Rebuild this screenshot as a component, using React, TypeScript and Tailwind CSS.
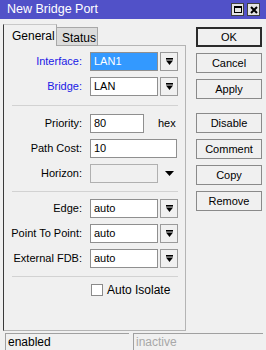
import React from "react";

function DropIcon() {
  return (
    <svg width="7" height="8" viewBox="0 0 7 8">
      <rect x="0" y="0" width="7" height="1.6" fill="#000" />
      <polygon points="0,2.6 7,2.6 3.5,7" fill="#000" />
    </svg>
  );
}

function Label({ text, blue }: { text: string; blue?: boolean }) {
  return (
    <div className={"w-[78px] text-right " + (blue ? "text-[#1a1ae6]" : "text-black")}>
      {text}
    </div>
  );
}

function SelectRow({ label, value, blue, selected }: { label: string; value: string; blue?: boolean; selected?: boolean }) {
  return (
    <div className="flex items-center h-[19px]">
      <Label text={label} blue={blue} />
      <div
        className={
          "ml-[8px] w-[68px] h-[19px] border border-[#8f8f8f] flex items-center pl-[3px] " +
          (selected ? "bg-[#3399ff] text-white" : "bg-white text-black")
        }
      >
        {value}
      </div>
      <div className="ml-[2px] w-[18px] h-[19px] border border-[#9a9a9a] bg-[#f0f0f0] flex items-center justify-center">
        <DropIcon />
      </div>
    </div>
  );
}

function Sep({ mt }: { mt: string }) {
  return <div className={"ml-[8px] w-[166px] h-px bg-[#d2d2d2] " + mt} />;
}

function Btn({ text, primary, mt }: { text: string; primary?: boolean; mt?: string }) {
  return (
    <div
      className={
        "w-[66px] h-[20px] bg-[#f0f0f0] flex items-center justify-center text-black " +
        (primary ? "border-2 border-[#2b2b2b] " : "border border-[#8a8a8a] ") +
        (mt ?? "")
      }
    >
      {text}
    </div>
  );
}

export default function App() {
  return (
    <div
      className="w-[266px] h-[350px] bg-[#f0f0f0] overflow-hidden flex flex-col text-[11px] leading-none"
      style={{ fontFamily: '"Liberation Sans", Arial, sans-serif' }}
    >
      {/* title bar */}
      <div className="h-[19px] bg-[#5151c8] flex items-center pl-[7px] shrink-0">
        <span className="text-white text-[12.5px]">New Bridge Port</span>
        <div className="ml-auto mr-[6px] flex gap-[3px]">
          <div className="w-[13px] h-[13px] bg-[#e4e4e4] border border-[#404040] flex items-center justify-center">
            <div className="w-[8px] h-[7px] border border-black border-t-2" />
          </div>
          <div className="w-[13px] h-[13px] bg-[#e4e4e4] border border-[#404040] flex items-center justify-center">
            <svg width="8" height="8" viewBox="0 0 8 8">
              <path d="M1 1 L7 7 M7 1 L1 7" stroke="#000" strokeWidth="2" />
            </svg>
          </div>
        </div>
      </div>

      <div className="flex flex-1">
        {/* left: tabs + panel */}
        <div className="ml-[3px] w-[183px] flex flex-col">
          <div className="flex items-end h-[27px]">
            <div className="w-[54px] h-[22px] border-l border-l-[#3a3a3a] border-t border-t-[#c8c8c8] border-r border-r-[#a8a8a8] bg-[#f0f0f0] flex items-center pl-[8px] text-[12px]">
              General
            </div>
            <div className="w-[41px] h-[19px] bg-[#dcdcdc] border-t border-r border-b border-[#a8a8a8] flex items-center pl-[5px] pt-[2px] text-[12px]">
              Status
            </div>
            <div className="flex-1 h-[19px] border-b border-[#b4b4b4]" />
          </div>
          <div className="h-[285px] border-l border-l-[#3a3a3a] border-r border-r-[#b4b4b4] border-b border-b-[#b4b4b4] flex flex-col pt-[6px]">
            <SelectRow label="Interface:" value="LAN1" blue selected />
            <div className="mt-[6px]">
              <SelectRow label="Bridge:" value="LAN" blue />
            </div>
            <Sep mt="mt-[9px]" />
            <div className="mt-[8px] flex items-center h-[19px]">
              <Label text="Priority:" />
              <div className="ml-[8px] w-[54px] h-[19px] border border-[#8f8f8f] bg-white flex items-center pl-[3px]">80</div>
              <span className="ml-[14px]">hex</span>
            </div>
            <div className="mt-[6px] flex items-center h-[19px]">
              <Label text="Path Cost:" />
              <div className="ml-[8px] w-[87px] h-[19px] border border-[#8f8f8f] bg-white flex items-center pl-[3px]">10</div>
            </div>
            <div className="mt-[6px] flex items-center h-[19px]">
              <Label text="Horizon:" />
              <div className="ml-[8px] w-[68px] h-[19px] border border-[#b0b0b0] bg-[#f0f0f0]" />
              <svg className="ml-[7px]" width="9" height="5" viewBox="0 0 9 5">
                <polygon points="0,0 9,0 4.5,5" fill="#000" />
              </svg>
            </div>
            <Sep mt="mt-[8px]" />
            <div className="mt-[7px]">
              <SelectRow label="Edge:" value="auto" />
            </div>
            <div className="mt-[6px]">
              <SelectRow label="Point To Point:" value="auto" />
            </div>
            <div className="mt-[6px]">
              <SelectRow label="External FDB:" value="auto" />
            </div>
            <Sep mt="mt-[8px]" />
            <div className="mt-[6px] flex items-center h-[14px] pl-[87px]">
              <div className="w-[12px] h-[12px] bg-white border border-[#8a8a8a]" />
              <span className="ml-[4px] text-[12px]">Auto Isolate</span>
            </div>
          </div>
        </div>

        {/* right: buttons */}
        <div className="ml-[10px] pt-[8px] flex flex-col gap-[6px]">
          <Btn text="OK" primary />
          <Btn text="Cancel" />
          <Btn text="Apply" />
          <Btn text="Disable" mt="mt-[8px]" />
          <Btn text="Comment" />
          <Btn text="Copy" />
          <Btn text="Remove" />
        </div>
      </div>

      {/* status bar */}
      <div className="h-[17px] flex gap-[4px] pl-[5px] shrink-0">
        <div className="w-[124px] h-[17px] border-t border-l border-[#a0a0a0] flex items-center pl-[2px] text-black text-[12px]">
          enabled
        </div>
        <div className="w-[130px] h-[17px] border-t border-l border-[#a0a0a0] flex items-center pl-[2px] text-[#a8a8a8] text-[12px]">
          inactive
        </div>
      </div>
    </div>
  );
}
